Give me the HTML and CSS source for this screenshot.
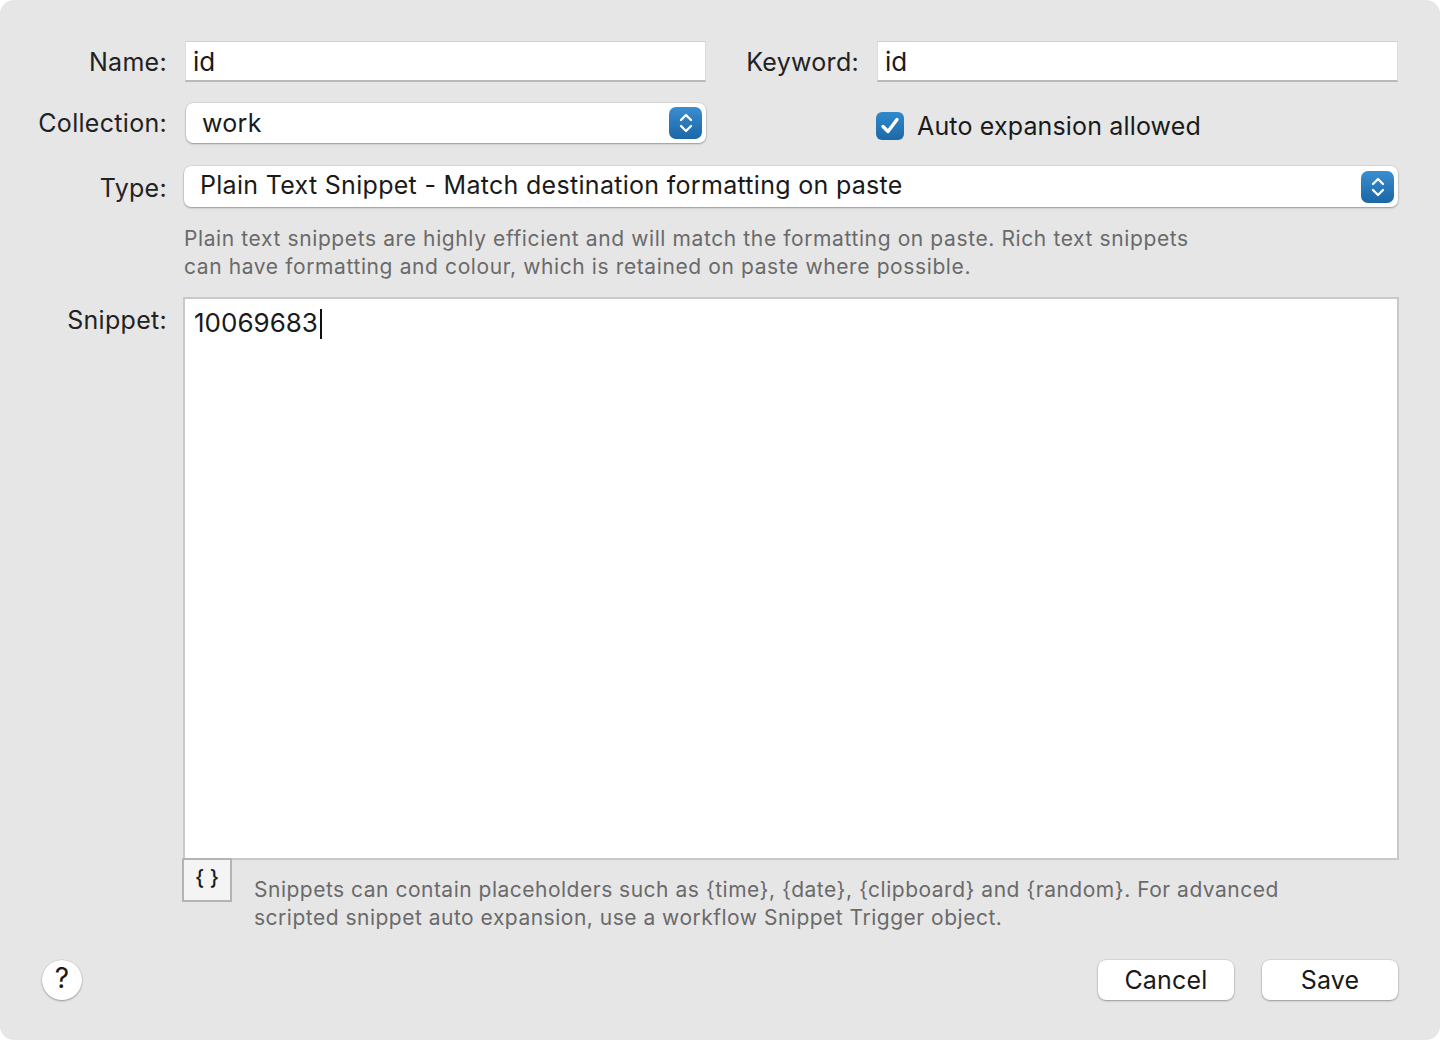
FILE: index.html
```html
<!DOCTYPE html>
<html>
<head>
<meta charset="utf-8">
<link rel="stylesheet" href="styles.css">
</head>
<body>
<div class="window">
  <div class="row row-top">
    <label class="label">Name:</label>
    <div class="field field-name">id</div>
    <label class="label label-kw">Keyword:</label>
    <div class="field field-kw">id</div>
  </div>
  <div class="row row-coll">
    <label class="label">Collection:</label>
    <div class="popup popup-coll">
      <span class="popup-text">work</span>
      <span class="stepper"><svg width="16" height="24" viewBox="0 0 16 24"><path d="M3 9 L8 4 L13 9 M3 15 L8 20 L13 15" fill="none" stroke="#fff" stroke-width="2.3" stroke-linecap="round" stroke-linejoin="round"/></svg></span>
    </div>
    <div class="check">
      <span class="checkbox"><svg width="24" height="24" viewBox="0 0 24 24"><path d="M5 12.5 L10 17.5 L19 5.5" fill="none" stroke="#fff" stroke-width="3.4" stroke-linecap="round" stroke-linejoin="round"/></svg></span>
      <span class="check-text">Auto expansion allowed</span>
    </div>
  </div>
  <div class="row row-type">
    <label class="label">Type:</label>
    <div class="popup popup-type">
      <span class="popup-text type-text">Plain Text Snippet - Match destination formatting on paste</span>
      <span class="stepper"><svg width="16" height="24" viewBox="0 0 16 24"><path d="M3 9 L8 4 L13 9 M3 15 L8 20 L13 15" fill="none" stroke="#fff" stroke-width="2.3" stroke-linecap="round" stroke-linejoin="round"/></svg></span>
    </div>
  </div>
  <p class="desc">Plain text snippets are highly efficient and will match the formatting on paste. Rich text snippets<br>can have formatting and colour, which is retained on paste where possible.</p>
  <div class="row row-snip">
    <label class="label label-snip">Snippet:</label>
    <div class="snippet-col">
      <div class="textarea"><span class="snip-text">10069683</span><span class="caret"></span></div>
      <div class="snip-foot">
        <button class="braces">{ }</button>
        <p class="hint">Snippets can contain placeholders such as {time}, {date}, {clipboard} and {random}. For advanced<br>scripted snippet auto expansion, use a workflow Snippet Trigger object.</p>
      </div>
    </div>
  </div>
  <div class="footer">
    <button class="help">?</button>
    <div class="actions">
      <button class="btn">Cancel</button>
      <button class="btn">Save</button>
    </div>
  </div>
</div>
</body>
</html>
```

FILE: styles.css
```css
* { box-sizing: border-box; }
html, body { margin: 0; padding: 0; background: #ffffff; }
body {
  font-family: Inter, "Helvetica Neue", Arial, sans-serif;
  color: #1f1f1f;
}
.window {
  width: 1440px;
  height: 1040px;
  background: #e6e6e6;
  border-radius: 14px;
  padding: 41px 42px 0 0;
  display: flex;
  flex-direction: column;
}
.row { display: flex; align-items: center; }
.label {
  width: 167px;
  flex: none;
  text-align: right;
  font-size: 25px;
  letter-spacing: 0.3px;
  color: #222;
  margin-right: 18px;
  white-space: nowrap;
}
.field {
  height: 41px;
  background: #fff;
  border-top: 1px solid #d0d0d0;
  border-left: 1px solid #dcdcdc;
  border-right: 1px solid #dcdcdc;
  border-bottom: 2px solid #b9b9b9;
  font-size: 26px;
  padding: 4px 0 0 7px;
  line-height: 32px;
  color: #1a1a1a;
}
.field-name { width: 521px; }
.label-kw { width: 153px; margin-right: 18px; }
.field-kw { flex: 1; }
.row-coll { margin-top: 21px; height: 40px; }
.popup {
  height: 40px;
  background: #fff;
  border-radius: 7px;
  box-shadow: 0 0 0 0.5px rgba(0,0,0,0.12), 0 1px 2px rgba(0,0,0,0.3);
  display: flex;
  align-items: center;
  justify-content: space-between;
  padding: 0 4px 0 16px;
}
.popup-coll { width: 520px; margin-left: 1px; }
.popup-text { font-size: 25px; color: #1a1a1a; letter-spacing: 0.3px; }
.stepper {
  width: 33px;
  height: 32px;
  border-radius: 7px;
  background: linear-gradient(#3a8ed0, #1b66a6);
  display: flex;
  align-items: center;
  justify-content: center;
}
.check { display: flex; align-items: center; margin-left: 170px; margin-top: 5px; }
.checkbox {
  width: 28px; height: 28px;
  border-radius: 6px;
  background: linear-gradient(#3089cc, #1d69a8);
  display: flex; align-items: center; justify-content: center;
}
.check-text { font-size: 25px; margin-left: 13px; color: #1a1a1a; letter-spacing: 0.15px; }
.row-type { margin-top: 23px; }
.row-type .label { padding-top: 2px; }
.popup-type { flex: 1; height: 41px; margin-left: -1px; padding-left: 16px; }
.type-text { margin-top: -3px; }
.desc {
  margin: 18px 0 0 184px;
  font-size: 21px;
  letter-spacing: 0.61px;
  line-height: 28px;
  color: #6a6a6a;
  white-space: nowrap;
}
.row-snip { margin-top: 16px; align-items: flex-start; }
.label-snip { margin-top: 8px; margin-right: 16px; }
.snippet-col { flex: 1; display: flex; flex-direction: column; margin-right: -1px; }
.textarea {
  height: 563px;
  background: #fff;
  border: 2px solid #c9c9c9;
  padding: 6px 0 0 9px;
  font-size: 26px;
  line-height: 36px;
  color: #1a1a1a;
  display: flex;
  align-items: flex-start;
}
.caret { display: inline-block; width: 2px; height: 30px; background: #111; margin-top: 4px; margin-left: 2px; }
.snip-foot { display: flex; align-items: flex-start; margin-top: -2px; }
.braces {
  width: 50px; height: 44px;
  margin-left: -1px;
  background: #f4f4f4;
  border: 2px solid #b4b4b4;
  font-family: Inter, sans-serif;
  font-weight: 500;
  font-size: 21px;
  color: #1a1a1a;
  padding: 0 0 6px 0;
}
.hint {
  margin: 18px 0 0 22px;
  font-size: 21px;
  letter-spacing: 0.5px;
  line-height: 28px;
  color: #6a6a6a;
  white-space: nowrap;
}
.footer {
  margin-top: auto;
  margin-bottom: 40px;
  display: flex;
  justify-content: space-between;
  align-items: center;
  padding-left: 42px;
}
.help {
  width: 40px; height: 40px;
  border-radius: 50%;
  background: #fff;
  border: none;
  box-shadow: 0 0 0 0.5px rgba(0,0,0,0.12), 0 1px 2px rgba(0,0,0,0.3);
  font-family: Inter, sans-serif;
  font-size: 28px;
  font-weight: 400;
  color: #1a1a1a;
  padding: 0 0 4px 0;
}
.actions { display: flex; gap: 28px; }
.btn {
  width: 136px; height: 40px;
  background: #fff;
  border: none;
  border-radius: 8px;
  box-shadow: 0 0 0 0.5px rgba(0,0,0,0.12), 0 1px 2px rgba(0,0,0,0.3);
  font-family: Inter, sans-serif;
  font-size: 25px;
  letter-spacing: 0.2px;
  color: #1a1a1a;
  padding: 0;
}
```
